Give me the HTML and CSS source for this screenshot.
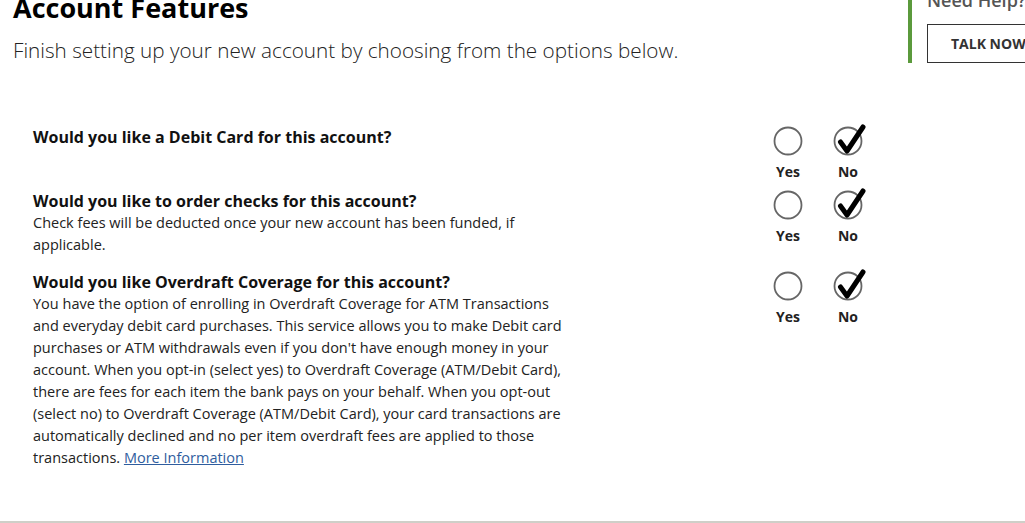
FILE: index.html
```html
<!DOCTYPE html>
<html lang="en">
<head>
<meta charset="utf-8">
<title>Account Features</title>
<link rel="stylesheet" href="styles.css">
</head>
<body>
<div class="page">
  <main class="content">
    <h1 class="title">Account Features</h1>
    <p class="subtitle">Finish setting up your new account by choosing from the options below.</p>

    <section class="questions">
      <div class="row">
        <div class="text">
          <h2 class="question">Would you like a Debit Card for this account?</h2>
        </div>
        <div class="choices">
          <div class="choice">
            <svg class="radio" viewBox="0 0 40 34" width="40" height="34"><circle cx="20" cy="19" r="13.5" fill="none" stroke="#666" stroke-width="1.8"/></svg>
            <span class="label">Yes</span>
          </div>
          <div class="choice">
            <svg class="radio" viewBox="0 0 40 34" width="40" height="34"><circle cx="20" cy="19" r="13.5" fill="none" stroke="#666" stroke-width="1.8"/><path d="M12.5 20 L19 29 L35 5" fill="none" stroke="#000" stroke-width="5" stroke-linecap="round" stroke-linejoin="round"/></svg>
            <span class="label">No</span>
          </div>
        </div>
      </div>

      <div class="row">
        <div class="text">
          <h2 class="question">Would you like to order checks for this account?</h2>
          <p class="desc">Check fees will be deducted once your new account has been funded, if applicable.</p>
        </div>
        <div class="choices">
          <div class="choice">
            <svg class="radio" viewBox="0 0 40 34" width="40" height="34"><circle cx="20" cy="19" r="13.5" fill="none" stroke="#666" stroke-width="1.8"/></svg>
            <span class="label">Yes</span>
          </div>
          <div class="choice">
            <svg class="radio" viewBox="0 0 40 34" width="40" height="34"><circle cx="20" cy="19" r="13.5" fill="none" stroke="#666" stroke-width="1.8"/><path d="M12.5 20 L19 29 L35 5" fill="none" stroke="#000" stroke-width="5" stroke-linecap="round" stroke-linejoin="round"/></svg>
            <span class="label">No</span>
          </div>
        </div>
      </div>

      <div class="row">
        <div class="text">
          <h2 class="question">Would you like Overdraft Coverage for this account?</h2>
          <p class="desc">You have the option of enrolling in Overdraft Coverage for ATM Transactions and everyday debit card purchases. This service allows you to make Debit card purchases or ATM withdrawals even if you don't have enough money in your account. When you opt-in (select yes) to Overdraft Coverage (ATM/Debit Card), there are fees for each item the bank pays on your behalf. When you opt-out (select no) to Overdraft Coverage (ATM/Debit Card), your card transactions are automatically declined and no per item overdraft fees are applied to those transactions. <a class="more" href="#">More Information</a></p>
        </div>
        <div class="choices">
          <div class="choice">
            <svg class="radio" viewBox="0 0 40 34" width="40" height="34"><circle cx="20" cy="19" r="13.5" fill="none" stroke="#666" stroke-width="1.8"/></svg>
            <span class="label">Yes</span>
          </div>
          <div class="choice">
            <svg class="radio" viewBox="0 0 40 34" width="40" height="34"><circle cx="20" cy="19" r="13.5" fill="none" stroke="#666" stroke-width="1.8"/><path d="M12.5 20 L19 29 L35 5" fill="none" stroke="#000" stroke-width="5" stroke-linecap="round" stroke-linejoin="round"/></svg>
            <span class="label">No</span>
          </div>
        </div>
      </div>
    </section>
  </main>

  <aside class="help">
    <div class="help-title">Need Help?</div>
    <button class="talk" type="button">TALK NOW</button>
  </aside>
</div>
<div class="footer-rule"></div>
</body>
</html>
```

FILE: styles.css
```css
html, body {
  margin: 0;
  padding: 0;
  overflow: hidden;
  background: #fff;
}

body {
  font-family: "Open Sans", "Liberation Sans", sans-serif;
  color: #222;
  width: 1025px;
  height: 523px;
  position: relative;
}

.page {
  display: flex;
  align-items: flex-start;
  width: 1025px;
  overflow: hidden;
}

.content {
  flex: 0 0 908px;
  box-sizing: border-box;
  padding-left: 13px;
  margin-top: -8px;
}

.title {
  margin: 0;
  font-size: 27px;
  line-height: 32px;
  font-weight: 700;
  color: #000;
}

.subtitle {
  margin: 11px 0 0;
  font-size: 20.7px;
  line-height: 30px;
  font-weight: 300;
  color: #222;
}

.questions {
  margin-top: 61px;
  padding-left: 20px;
  display: flex;
  flex-direction: column;
  gap: 15px;
}

.row {
  display: grid;
  grid-template-columns: 735px auto;
  align-items: start;
}

.text {
  width: 536px;
}

.question {
  margin: 0;
  font-size: 16px;
  line-height: 22px;
  font-weight: 700;
  color: #111;
}

.desc {
  margin: 0;
  font-size: 14.5px;
  line-height: 22px;
  color: #222;
}

.more {
  color: #2f5d9e;
  text-decoration: underline;
}

.choices {
  display: flex;
  gap: 20px;
  margin-top: -4px;
  margin-bottom: -4px;
}

.choice {
  width: 40px;
  display: flex;
  flex-direction: column;
  align-items: center;
}

.radio {
  display: block;
}

.label {
  margin-top: 9px;
  font-size: 14px;
  line-height: 14px;
  font-weight: 700;
  color: #222;
}

.help {
  flex: 0 0 auto;
  margin-top: -20px;
  padding-top: 8px;
  padding-left: 15px;
  border-left: 4px solid #5b9a3c;
  box-sizing: border-box;
  height: 83px;
}

.help-title {
  font-size: 18px;
  line-height: 24px;
  font-weight: 600;
  color: #555;
}

.talk {
  display: block;
  margin-top: 12px;
  height: 39px;
  padding: 0 23px;
  background: #fff;
  border: 1px solid #333;
  font-family: "Open Sans", "Liberation Sans", sans-serif;
  font-size: 14px;
  font-weight: 700;
  color: #333;
  white-space: nowrap;
}

.footer-rule {
  position: absolute;
  left: 0;
  right: 0;
  top: 521px;
  border-top: 2px solid #cfcfc8;
}
```
